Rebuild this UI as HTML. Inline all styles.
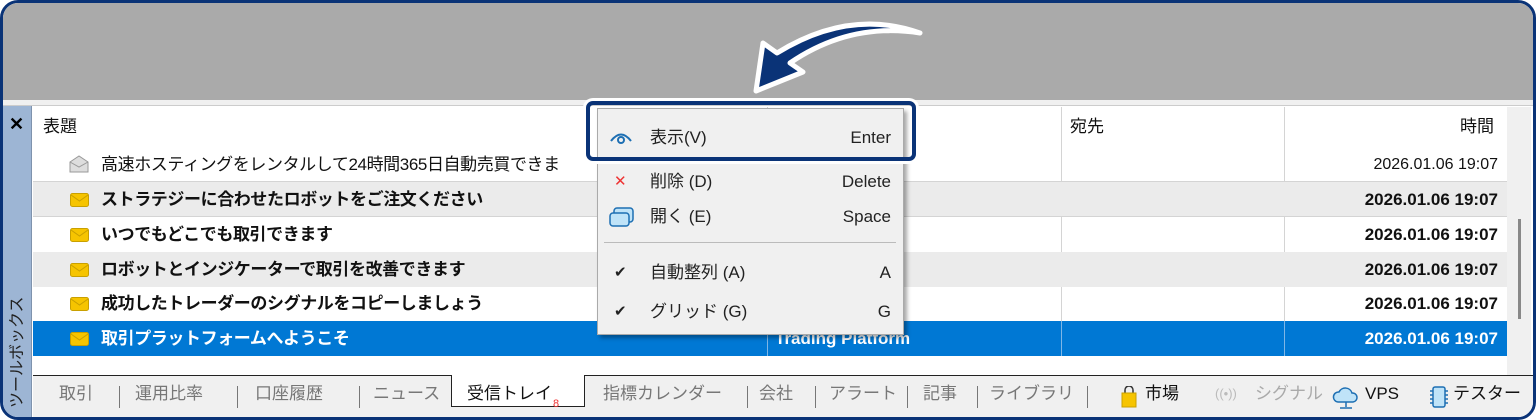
<!DOCTYPE html>
<html><head><meta charset="utf-8"><style>
*{margin:0;padding:0;box-sizing:border-box}
html,body{width:1536px;height:420px;overflow:hidden}
body{background:#fff;font-family:"Liberation Sans","Noto Sans CJK JP",sans-serif;position:relative}
.frame{position:absolute;left:0;top:0;width:1536px;height:420px;border:3px solid #0a3377;border-radius:18px;overflow:hidden;background:#fff}
.in{position:absolute;left:-3px;top:-3px;width:1536px;height:420px}
.top{position:absolute;left:0;top:0;width:1536px;height:100px;background:#aaa}
.band{position:absolute;left:0;top:100px;width:1536px;height:6px;background:#f0f0f0;border-bottom:1px solid #ccc}
.side{position:absolute;left:0;top:106px;width:32px;height:314px;background:#9db5d4;border-right:1px solid #7f93ad}
.side .x{position:absolute;left:9px;top:8px;font-size:18px;font-weight:bold;color:#000}
.side .vt{position:absolute;left:8px;top:302px;width:120px;height:20px;line-height:20px;transform:rotate(-90deg);transform-origin:left top;font-size:16px;color:#222;white-space:nowrap}
.tbl{position:absolute;left:33px;top:107px;width:1474px}
.row{position:absolute;left:0;width:1474px;height:35px;font-size:17px;line-height:35px;color:#111}
.row.g{background:#ebebeb}
.row.sel{background:#0078d4;color:#fff}
.row .t{position:absolute;left:68px;top:0;white-space:nowrap;letter-spacing:-0.4px}
.row .f{position:absolute;left:738px;top:0}
.row .d{position:absolute;right:9px;top:0}
.b{font-weight:bold}
.hl{position:absolute;left:0;width:1474px;height:1px;background:#d4d4d4}
.vl{position:absolute;width:1px;background:#d4d4d4}
.env{position:absolute;left:37px}
.scroll{position:absolute;left:1507px;top:107px;width:24px;height:268px;background:#f0f0f0}
.scroll i{position:absolute;left:11px;top:112px;width:3px;height:100px;background:#888}
.tabs{position:absolute;left:33px;top:375px;width:1503px;height:45px;background:#f0f0f0;border-top:1px solid #222}
.tab{position:absolute;top:6px;font-size:17px;line-height:24px;color:#777;white-space:nowrap}
.sep{position:absolute;top:10px;width:1px;height:22px;background:#777}
.act{position:absolute;left:418px;top:-1px;width:134px;height:32px;background:#fff;border:1px solid #222;border-top:none}
.menu{position:absolute;left:597px;top:108px;width:307px;height:227px;background:#f0f0f0;border:1px solid #aaa;box-shadow:3px 3px 4px rgba(0,0,0,.35)}
.mi{position:absolute;left:0;width:305px;height:30px;font-size:17px;line-height:30px;color:#222}
.mi .l{position:absolute;left:52px}
.mi .r{position:absolute;right:12px}
.mi .c{position:absolute;left:16px;font-size:15px}
.box{position:absolute;left:586px;top:101px;width:330px;height:60px;border:4px solid #0a3377;border-radius:7px;box-shadow:0 0 0 3px #fff}
</style></head><body>
<div class="frame"><div class="in">
<div class="top"></div>
<div class="band"></div>
<div class="side"><div class="x">✕</div><div class="vt">ツールボックス</div></div>
<div class="tbl">
 <div class="row" style="top:0;height:41px;line-height:40px"><span style="position:absolute;left:10px">表題</span><span style="position:absolute;left:1037px">宛先</span><span style="position:absolute;right:13px">時間</span></div>
 <div class="vl" style="left:734px;top:0;height:248px"></div>
 <div class="vl" style="left:1028px;top:0;height:248px"></div>
 <div class="vl" style="left:1251px;top:0;height:248px"></div>
 <div class="row" style="top:40px"><svg style="position:absolute;left:36px;top:8px" width="20" height="18"><path d="M1 7 L10 1 L19 7 V17 H1 Z" fill="#ddd" stroke="#999"/><path d="M1 7 L10 12 L19 7" fill="none" stroke="#999"/></svg><span class="t">高速ホスティングをレンタルして24時間365日自動売買できま</span><span class="d" style="font-size:16px">2026.01.06 19:07</span></div>
 <div class="hl" style="top:74px"></div>
 <div class="row g b" style="top:75px"><svg class="env" style="top:11px" width="19" height="14"><rect x="0.5" y="0.5" width="18" height="13" rx="2" fill="#f6c400" stroke="#c9a000"/><path d="M1 2 L9.5 8 L18 2" fill="none" stroke="#c9a000"/></svg><span class="t">ストラテジーに合わせたロボットをご注文ください</span><span class="f">rm</span><span class="d">2026.01.06 19:07</span></div>
 <div class="hl" style="top:109px"></div>
 <div class="row b" style="top:110px"><svg class="env" style="top:11px" width="19" height="14"><rect x="0.5" y="0.5" width="18" height="13" rx="2" fill="#f6c400" stroke="#c9a000"/><path d="M1 2 L9.5 8 L18 2" fill="none" stroke="#c9a000"/></svg><span class="t">いつでもどこでも取引できます</span><span class="f">rm</span><span class="d">2026.01.06 19:07</span></div>
 <div class="row g b" style="top:145px"><svg class="env" style="top:11px" width="19" height="14"><rect x="0.5" y="0.5" width="18" height="13" rx="2" fill="#f6c400" stroke="#c9a000"/><path d="M1 2 L9.5 8 L18 2" fill="none" stroke="#c9a000"/></svg><span class="t">ロボットとインジケーターで取引を改善できます</span><span class="f">rm</span><span class="d">2026.01.06 19:07</span></div>
 <div class="row b" style="top:179px"><svg class="env" style="top:11px" width="19" height="14"><rect x="0.5" y="0.5" width="18" height="13" rx="2" fill="#f6c400" stroke="#c9a000"/><path d="M1 2 L9.5 8 L18 2" fill="none" stroke="#c9a000"/></svg><span class="t">成功したトレーダーのシグナルをコピーしましょう</span><span class="f">rm</span><span class="d">2026.01.06 19:07</span></div>
 <div class="row sel b" style="top:214px"><svg class="env" style="top:11px" width="19" height="14"><rect x="0.5" y="0.5" width="18" height="13" rx="2" fill="#f6c400" stroke="#c9a000"/><path d="M1 2 L9.5 8 L18 2" fill="none" stroke="#c9a000"/></svg><span class="t">取引プラットフォームへようこそ</span><span style="position:absolute;left:742px">Trading Platform</span><span class="vl" style="left:734px;top:0;height:35px;background:#7fb6e6"></span><span class="vl" style="left:1028px;top:0;height:35px;background:#7fb6e6"></span><span class="vl" style="left:1251px;top:0;height:35px;background:#7fb6e6"></span><span class="d">2026.01.06 19:07</span></div>
</div>
<div class="scroll"><i></i></div>
<div class="tabs">
 <div class="act"></div>
 <span class="tab" style="left:26px">取引</span><span class="sep" style="left:86px"></span>
 <span class="tab" style="left:102px">運用比率</span><span class="sep" style="left:204px"></span>
 <span class="tab" style="left:222px">口座履歴</span><span class="sep" style="left:326px"></span>
 <span class="tab" style="left:340px">ニュース</span>
 <span class="tab" style="left:434px;color:#111">受信トレイ</span><span style="position:absolute;left:520px;top:22px;font-size:11px;line-height:12px;color:#e33">8</span>
 <span class="tab" style="left:570px">指標カレンダー</span><span class="sep" style="left:714px"></span>
 <span class="tab" style="left:726px">会社</span><span class="sep" style="left:782px"></span>
 <span class="tab" style="left:796px">アラート</span><span class="sep" style="left:874px"></span>
 <span class="tab" style="left:890px">記事</span><span class="sep" style="left:944px"></span>
 <span class="tab" style="left:956px">ライブラリ</span><span class="sep" style="left:1054px"></span>
 <svg style="position:absolute;left:1088px;top:10px" width="16" height="22"><path d="M4 7 V4 a4 4 0 0 1 8 0 V7" fill="none" stroke="#333" stroke-width="1.5"/><rect x="1" y="7" width="14" height="14" fill="#f6c400" stroke="#c9a000"/></svg>
 <span class="tab" style="left:1112px;color:#111">市場</span>
 <span class="tab" style="left:1182px;color:#bbb;font-size:13px">((•))</span><span class="tab" style="left:1222px;color:#aaa">シグナル</span>
 <svg style="position:absolute;left:1298px;top:9px" width="30" height="26"><path d="M7 17 a5 5 0 0 1 1-10 a7 7 0 0 1 13 1 a4.5 4.5 0 0 1 1 9 Z" fill="#bfe3f8" stroke="#1d6fb3" stroke-width="1.5"/><path d="M15 17 V22 M9 23 H21" stroke="#1d6fb3" stroke-width="1.5"/></svg>
 <span class="tab" style="left:1332px;color:#111">VPS</span>
 <svg style="position:absolute;left:1395px;top:8px" width="22" height="26"><rect x="5" y="3" width="12" height="20" rx="2" fill="#bfe3f8" stroke="#1d6fb3" stroke-width="1.5"/><path d="M2 7H5M2 11H5M2 15H5M2 19H5M17 7H20M17 11H20M17 15H20M17 19H20" stroke="#1d6fb3" stroke-width="1.5"/></svg>
 <span class="tab" style="left:1420px;color:#111">テスター</span>
</div>
<div class="menu">
 <div class="mi" style="top:14px"><svg style="position:absolute;left:12px;top:8px" width="22" height="14"><path d="M1 10 Q11 -3 21 10" fill="none" stroke="#1d6fb3" stroke-width="2"/><circle cx="11" cy="9" r="3" fill="none" stroke="#1d6fb3" stroke-width="2"/></svg><span class="l">表示(V)</span><span class="r">Enter</span></div>
 <div class="mi" style="top:58px"><span class="c" style="color:#e33">✕</span><span class="l">削除 (D)</span><span class="r">Delete</span></div>
 <div class="mi" style="top:93px"><svg style="position:absolute;left:11px;top:4px" width="26" height="22"><rect x="5" y="2" width="19" height="14" rx="3" fill="#bfe3f8" stroke="#1d6fb3" stroke-width="1.5"/><rect x="1" y="7" width="19" height="13" rx="3" fill="#bfe3f8" stroke="#1d6fb3" stroke-width="1.5"/></svg><span class="l">開く (E)</span><span class="r">Space</span></div>
 <div style="position:absolute;left:6px;top:133px;width:292px;height:1px;background:#bbb"></div>
 <div class="mi" style="top:149px"><span class="c">✔</span><span class="l">自動整列 (A)</span><span class="r">A</span></div>
 <div class="mi" style="top:188px"><span class="c">✔</span><span class="l">グリッド (G)</span><span class="r">G</span></div>
</div>
<div class="box"></div>
<svg style="position:absolute;left:0;top:0" width="1536" height="120"><path d="M920 33 Q850 8 777 53 L763 43 L756 91 L803 72 L790 63 Q850 22 920 33 Z" fill="#0a3377" stroke="#fff" stroke-width="5" stroke-linejoin="round"/></svg>
</div></div>
</body></html>
